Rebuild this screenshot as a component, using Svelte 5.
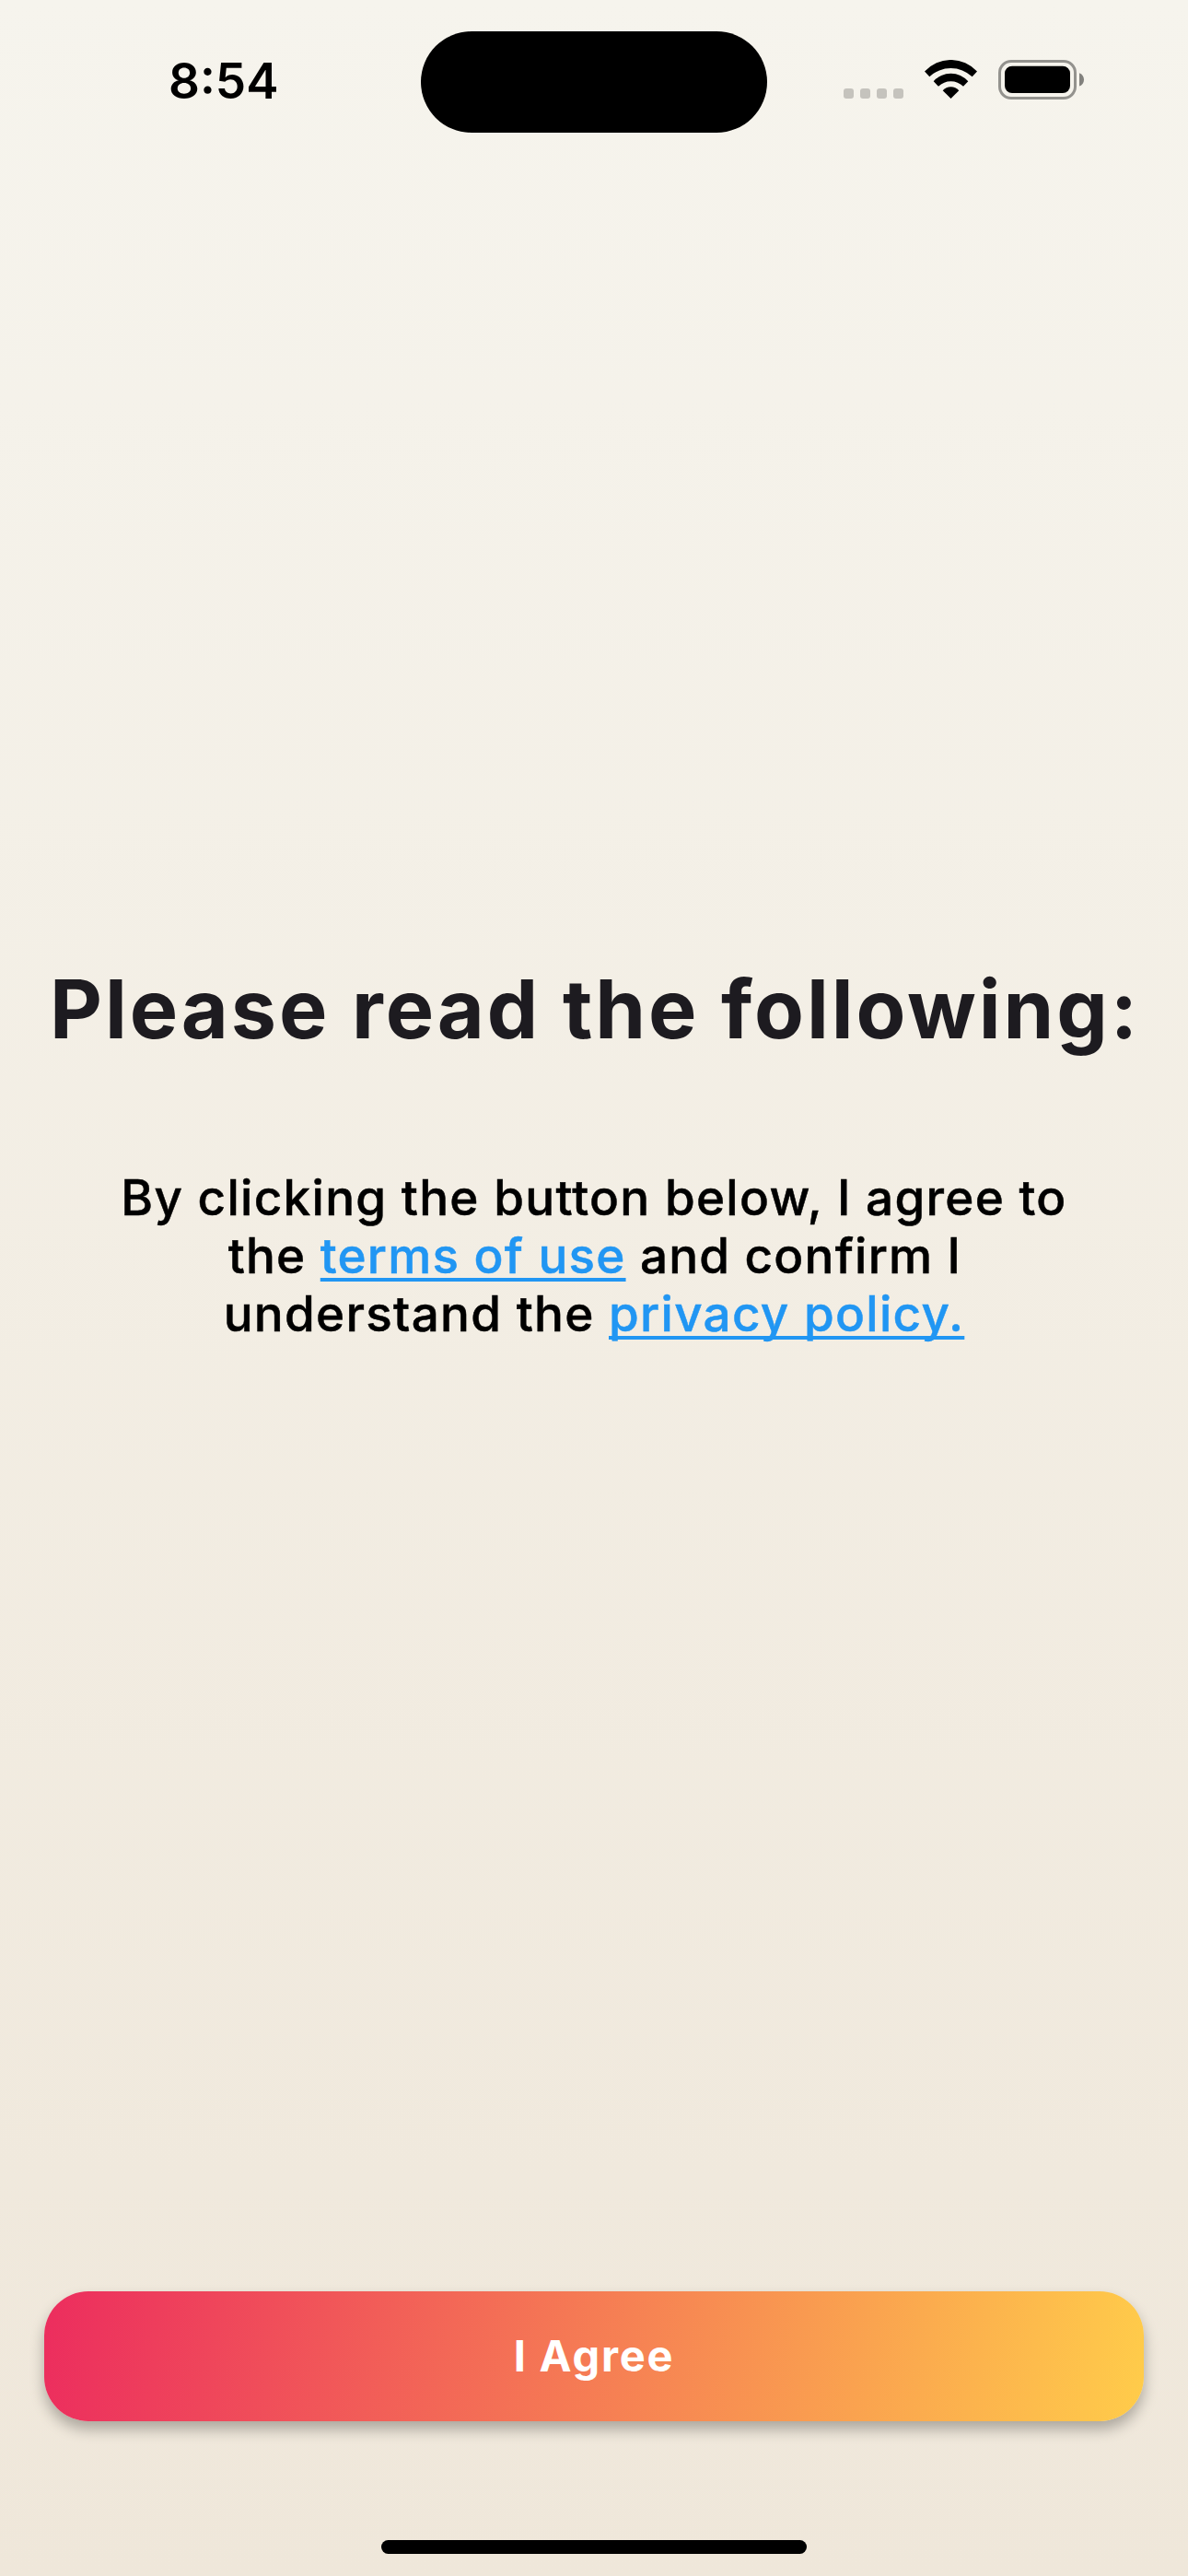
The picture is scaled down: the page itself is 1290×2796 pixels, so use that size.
<script>
  const signalDots = [0, 1, 2, 3];
</script>

<div class="screen">
  <header>
    <div class="time">8:54</div>
    <div class="island"></div>
    <div class="status">
      <div class="dots">{#each signalDots as dot}<i></i>{/each}</div>
      <svg class="wifi" width="57" height="42" viewBox="0 0 57 42">
        <path d="M0 12.600A38.500 38.500 0 0 1 57 12.600L51.700 18.300A33.600 33.600 0 0 0 5.300 18.300Z" />
        <path d="M9.700 23.300A24.800 24.800 0 0 1 47.300 23.300L42 28.700A19.600 19.600 0 0 0 15 28.700Z" />
        <path d="M19.700 33.200A12 12 0 0 1 37.300 33.200L28.500 42Z" />
      </svg>
      <svg class="battery" width="94" height="43" viewBox="0 0 94 43">
        <rect x="1.500" y="1.500" width="82" height="40" rx="12.500" fill="none" stroke="#000" stroke-opacity=".4" stroke-width="3" />
        <rect x="7" y="6.700" width="71" height="29.300" rx="8" />
        <path d="M88 14.300c6.700 2.500 6.700 11.700 0 14.200z" fill-opacity=".47" />
      </svg>
    </div>
  </header>
  <main>
    <h1>Please read the following:</h1>
    <p>
      <span>By clicking the button below, I agree to</span>
      <span class="inset">the <a href="#terms">terms of use</a> and confirm I</span>
      <span>understand the <a href="#privacy">privacy policy.</a></span>
    </p>
  </main>
  <footer>
    <button>I Agree</button>
    <div class="home"></div>
  </footer>
</div>

<style>
  :global(body) { margin: 0; }
  .screen { box-sizing: border-box; width: 1290px; height: 2796px; display: flex; flex-direction: column; overflow: hidden; font-family: Inter, sans-serif; background: linear-gradient(#f6f4ed, #efe7da); }
  header { height: 177px; display: grid; grid-template-columns: 456.7px 376.6px 456.7px; box-sizing: border-box; padding-top: 33.7px; }
  .time { font-size: 53px; font-weight: 600; line-height: 62px; padding: 23.300px 0 0 183px; }
  .island { height: 110.600px; border-radius: 56px; background: #000; }
  .status { display: flex; align-items: flex-start; }
  .dots { display: flex; gap: 7px; padding: 62.300px 0 0 82.700px; }
  .dots i { width: 11px; height: 11px; border-radius: 3px; background: #c5c3bd; }
  .wifi { margin: 31.300px 0 0 23px; }
  .battery { margin: 31.300px 0 0 23px; }
  main { flex: 1; text-align: center; padding-top: 865px; }
  h1 { margin: 0; padding-left: 2px; font-size: 88px; line-height: 107px; font-weight: 700; letter-spacing: 2.900px; color: #1d1b20; white-space: nowrap; }
  p { margin: 120px 0 0; font-size: 53px; line-height: 63px; font-weight: 500; letter-spacing: 1.280px; -webkit-text-stroke: .5px currentColor; }
  span { display: block; white-space: nowrap; }
  .inset { padding-left: 2px; letter-spacing: 1.200px; }
  a { color: #2196f3; text-decoration: underline; text-decoration-thickness: 4px; text-underline-offset: 4.500px; text-decoration-skip-ink: none; }
  footer { height: 309px; padding: 0 48px; display: flex; flex-direction: column; align-items: center; }
  button { width: 1194px; height: 141px; padding: 0 0 2px; border: 0; border-radius: 48px; font: 700 47px/56px Inter, sans-serif; letter-spacing: 1.800px; color: #fff; background: linear-gradient(96.7deg, #ec2d5e, #ffcc4a); box-shadow: 0 9px 15px rgba(0, 0, 0, .28); }
  .home { width: 462px; height: 15px; border-radius: 8px; background: #000; margin-top: 129px; }
</style>
